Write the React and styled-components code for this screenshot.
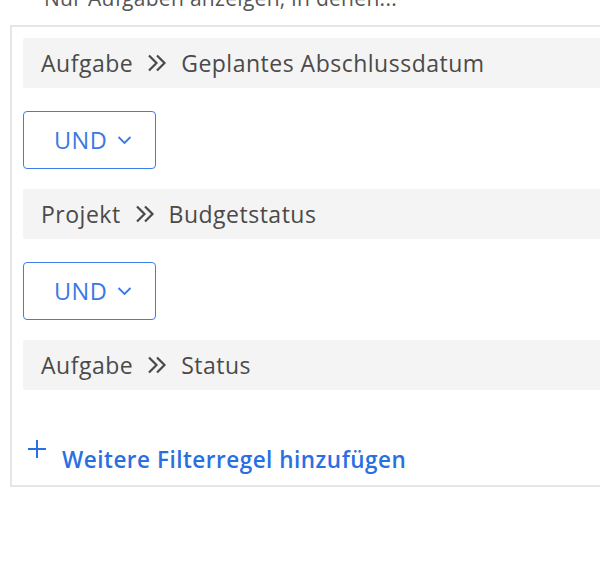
import React from "react";
import styled, { createGlobalStyle } from "styled-components";

const GlobalStyle = createGlobalStyle`
  html, body {
    margin: 0;
    padding: 0;
    background: #ffffff;
    overflow: hidden;
  }
  body {
    font-family: "Open Sans", "Liberation Sans", sans-serif;
  }
`;

const Page = styled.div`
  width: 600px;
  height: 564px;
  overflow: hidden;
`;

// the view is scrolled, so the intro line is partly above the top edge
const Intro = styled.div`
  margin-top: -16px;
  padding-left: 44px;
  height: 41px;
  line-height: 28px;
  font-size: 21px;
  letter-spacing: 0.3px;
  color: #555;
`;

const Panel = styled.div`
  margin-left: 10px;
  width: 640px;
  border: 2px solid #e6e6e6;
  padding: 11px 0 10px 11px;
  display: flex;
  flex-direction: column;
  align-items: flex-start;
`;

const Rule = styled.div`
  align-self: stretch;
  height: 50px;
  display: flex;
  align-items: center;
  gap: 14px;
  padding-left: 18px;
  background: #f4f4f4;
  border-radius: 2px;
  font-size: 23px;
  letter-spacing: 0.5px;
  color: #4a4a4a;
  margin-bottom: ${(p) => (p.last ? "0" : "23px")};
`;

const Chevrons = styled.svg`
  width: 20px;
  height: 20px;
  flex: none;
`;

const Operator = styled.button`
  width: 133px;
  height: 58px;
  margin-bottom: 20px;
  display: flex;
  align-items: center;
  gap: 10px;
  padding: 0 0 0 30px;
  background: #fff;
  border: 1.5px solid #3c7ee8;
  border-radius: 4px;
  font-family: inherit;
  font-size: 23.5px;
  letter-spacing: 0.4px;
  color: #3a78e6;
  cursor: pointer;
`;

const AddLink = styled.a`
  margin-top: 49px;
  margin-left: 4px;
  display: flex;
  align-items: flex-start;
  gap: 15px;
  font-size: 22.5px;
  font-weight: 600;
  letter-spacing: 0.5px;
  color: #2a6fe2;
  text-decoration: none;
  cursor: pointer;
`;

const AddLabel = styled.span`
  margin-top: 6px;
  line-height: 30px;
`;

const PlusIcon = styled.svg`
  width: 20px;
  height: 20px;
  flex: none;
`;

const DoubleRight = () => (
  <Chevrons viewBox="0 0 20 20" fill="none" stroke="#4a4a4a" strokeWidth="2.2">
    <path d="M2 2.5l7.5 7.5-7.5 7.5" />
    <path d="M10 2.5l7.5 7.5-7.5 7.5" />
  </Chevrons>
);

const Down = () => (
  <svg width="15" height="10" viewBox="0 0 15 10" fill="none" stroke="#3a78e6" strokeWidth="1.8">
    <path d="M1.5 2l6 6 6-6" />
  </svg>
);

const FilterRule = ({ entity, field, last }) => (
  <Rule last={last}>
    <span>{entity}</span>
    <DoubleRight />
    <span>{field}</span>
  </Rule>
);

export default function App() {
  return (
    <Page>
      <GlobalStyle />
      <Intro>Nur Aufgaben anzeigen, in denen...</Intro>
      <Panel>
        <FilterRule entity="Aufgabe" field="Geplantes Abschlussdatum" />
        <Operator>
          UND <Down />
        </Operator>
        <FilterRule entity="Projekt" field="Budgetstatus" />
        <Operator>
          UND <Down />
        </Operator>
        <FilterRule entity="Aufgabe" field="Status" last />
        <AddLink>
          <PlusIcon viewBox="0 0 20 20" fill="none" stroke="#2a6fe2" strokeWidth="2">
            <path d="M10 1v18M1 10h18" />
          </PlusIcon>
          <AddLabel>Weitere Filterregel hinzufügen</AddLabel>
        </AddLink>
      </Panel>
    </Page>
  );
}
